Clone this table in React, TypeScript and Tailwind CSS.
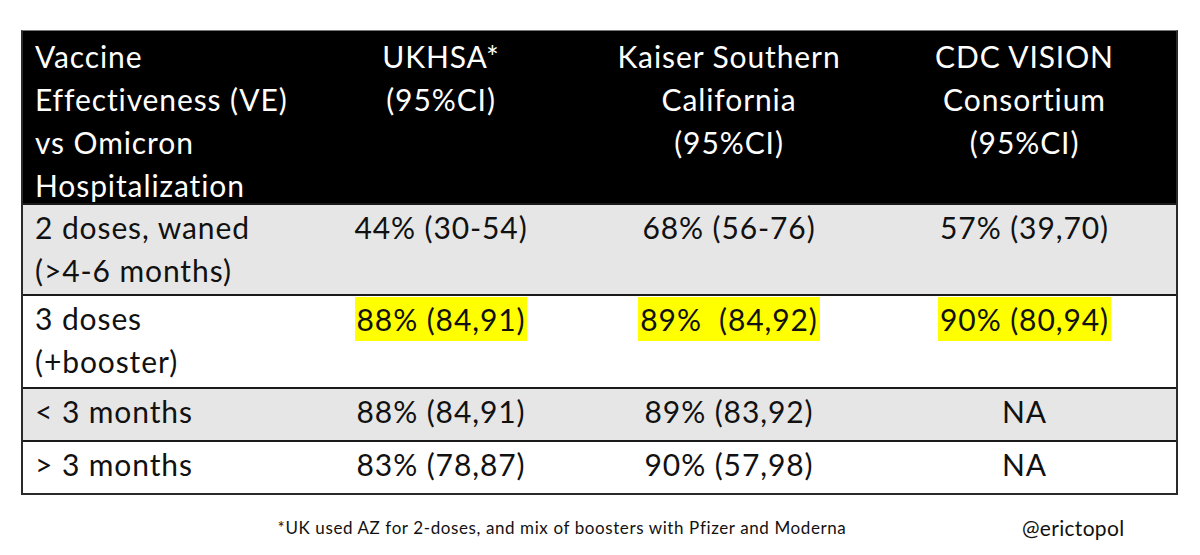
const font = { fontFamily: '"Lato", "Open Sans", sans-serif' }

const rows = [
  { label: ['2 doses, waned', '(>4-6 months)'], values: ['44% (30-54)', '68% (56-76)', '57% (39,70)'], gray: true, h: 'h-[91px]', hl: false },
  { label: ['3 doses', '(+booster)'], values: ['88% (84,91)', '89%\u00a0 (84,92)', '90% (80,94)'], gray: false, h: 'h-[93px]', hl: true },
  { label: ['< 3 months'], values: ['88% (84,91)', '89% (83,92)', 'NA'], gray: true, h: 'h-[53px]', hl: false },
  { label: ['> 3 months'], values: ['83% (78,87)', '90% (57,98)', 'NA'], gray: false, h: 'h-[53px]', hl: false },
]

const headers = [
  ['UKHSA*', '(95%CI)'],
  ['Kaiser Southern', 'California', '(95%CI)'],
  ['CDC VISION', 'Consortium', '(95%CI)'],
]

export default function App() {
  return (
    <div className="w-[1200px] h-[555px] bg-white overflow-hidden" style={font}>
      <div className="ml-[21px] mt-[30px] w-[1157px] border-2 border-[#2a2a2a] border-t-[#777] border-t">
        {/* header */}
        <div className="grid grid-cols-[274px_288px_288px_1fr] bg-black text-white h-[172px] text-[30px] tracking-[0.9px] leading-[43px] pt-[4px]">
          <div className="pl-[12px]">
            <div>Vaccine</div>
            <div>Effectiveness (VE)</div>
            <div>vs Omicron</div>
            <div>Hospitalization</div>
          </div>
          {headers.map((h, i) => (
            <div key={i} className="text-center">
              {h.map((l) => (
                <div key={l}>{l}</div>
              ))}
            </div>
          ))}
        </div>

        {rows.map((r, i) => (
          <div
            key={i}
            className={`grid grid-cols-[274px_288px_288px_1fr] border-t-2 border-[#1a1a1a] text-[#111] text-[30px] tracking-[0.9px] leading-[43px] pt-[1px] ${r.h} ${r.gray ? 'bg-[#e6e6e6]' : 'bg-white'}`}
          >
            <div className="pl-[12px]">
              {r.label.map((l) => (
                <div key={l}>{l}</div>
              ))}
            </div>
            {r.values.map((v, j) => (
              <div key={j} className="text-center">
                <span className={r.hl ? 'inline-block bg-[#ffff00] px-[2px] h-[44px] leading-[44px]' : ''}>{v}</span>
              </div>
            ))}
          </div>
        ))}
      </div>

      <div className="flex items-center mt-[17px] text-[#111]">
        <div className="w-[1000px] text-center text-[17px] tracking-[0.6px] pl-[124px]">
          *UK used AZ for 2-doses, and mix of boosters with Pfizer and Moderna
        </div>
        <div className="text-[21px] tracking-[0.3px] ml-[22px]">@erictopol</div>
      </div>
    </div>
  )
}
